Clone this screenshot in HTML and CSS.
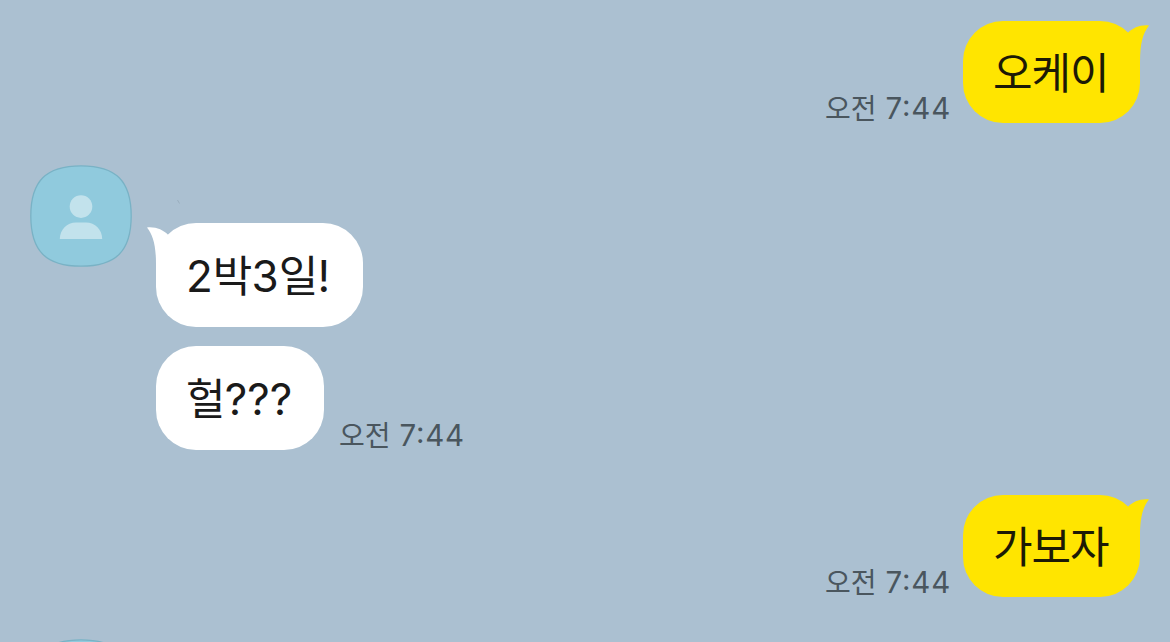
FILE: index.html
```
<!DOCTYPE html>
<html lang="ko">

<head>
    <meta charset="UTF-8">
    <meta name="viewport" content="width=device-width, initial-scale=1.0">
    <title>채팅</title>
    <link rel="stylesheet" href="styles.css">
</head>

<body>
    <main class="chat">
        <section class="row mine">
            <time class="time">오전 <span class="num">7:44</span></time>
            <div class="bubble">
                오케이
                <svg class="tail" viewBox="0 0 22 38"><path d="M1 7.7 C6 3 13 -.4 22 .5 C16 8 13 18 13 37 L0 37 Z" /></svg>
            </div>
        </section>

        <section class="row theirs">
            <svg class="avatar" viewBox="0 0 102 102">
                <path class="avatar-bg" d="M51 .8 C86 .8 101.2 16 101.2 51 S86 101.2 51 101.2 S.8 86 .8 51 S16 .8 51 .8 Z" />
                <circle class="person" cx="51" cy="41.6" r="11.3" />
                <path class="person" d="M29.8 74 C29.8 64.5 37 57.4 46 57.4 H56 C65 57.4 72.2 64.5 72.2 74 Z" />
            </svg>
            <div class="messages">
                <svg class="name" viewBox="0 0 100 58"><path d="M21.5 35 L23.5 38.5" /></svg>
                <div class="bubble">
                    2<span class="ko">박</span>3<span class="ko">일</span>!
                    <svg class="tail" viewBox="0 0 22 38"><path d="M1 7.7 C6 3 13 -.4 22 .5 C16 8 13 18 13 37 L0 37 Z" /></svg>
                </div>
                <div class="line">
                    <div class="bubble"><span class="ko">헐</span>???</div>
                    <time class="time">오전 <span class="num">7:44</span></time>
                </div>
            </div>
        </section>

        <section class="row mine">
            <time class="time">오전 <span class="num">7:44</span></time>
            <div class="bubble">
                가보자
                <svg class="tail" viewBox="0 0 22 38"><path d="M1 7.7 C6 3 13 -.4 22 .5 C16 8 13 18 13 37 L0 37 Z" /></svg>
            </div>
        </section>

        <section class="row theirs">
            <svg class="avatar" viewBox="0 0 102 102">
                <path class="avatar-bg" d="M51 .8 C86 .8 101.2 16 101.2 51 S86 101.2 51 101.2 S.8 86 .8 51 S16 .8 51 .8 Z" />
            </svg>
        </section>
    </main>
</body>

</html>
```

FILE: styles.css
```
* {
    margin: 0;
    padding: 0;
    box-sizing: border-box;
}

body {
    font-family: Inter, "Noto Sans CJK KR", sans-serif;
    color: #1a1a1a;
    background-color: #abc0d1;
    overflow: hidden;
}

.chat {
    height: 642px;
    padding: 21.4px 30px 0;
    overflow: hidden;
}

.row {
    display: flex;
}

.mine {
    justify-content: flex-end;
    align-items: flex-end;
    gap: 13px;
}

.theirs {
    align-items: flex-start;
    gap: 24px;
    margin: 42px 0 45px;
}

.messages {
    display: flex;
    flex-direction: column;
    align-items: flex-start;
    gap: 19px;
}

.name {
    width: 100px;
    height: 58px;
    margin-bottom: -19px;
    fill: none;
    stroke: #9aaebe;
    stroke-width: 1;
}

.line {
    display: flex;
    align-items: flex-end;
    gap: 15px;
}

.bubble {
    position: relative;
    width: 207px;
    height: 104px;
    padding-left: 30px;
    border-radius: 40px;
    background: #fff;
    font-size: 44px;
    line-height: 106px;
    white-space: nowrap;
}

.line .bubble {
    width: 168px;
}

.mine .bubble {
    width: 177px;
    height: 102px;
    background: #ffe500;
    color: #1c1a05;
    font-size: 43px;
    line-height: 104px;
    letter-spacing: -1px;
}

.ko {
    font-size: 43px;
    letter-spacing: -0.8px;
}

.tail {
    position: absolute;
    top: 4px;
    left: -9px;
    width: 22px;
    height: 38px;
    fill: #fff;
    transform: scaleX(-1);
}

.mine .tail {
    left: auto;
    right: -9px;
    fill: #ffe500;
    transform: none;
}

.time {
    margin-bottom: -1px;
    color: #4a565e;
    font-size: 28px;
    line-height: 30px;
    white-space: nowrap;
}

.num {
    margin-left: 1px;
    margin-right: -1px;
    font-size: 29.5px;
    font-feature-settings: "case";
    letter-spacing: 0.8px;
}

.avatar {
    flex: none;
    width: 102px;
    height: 102px;
}

.avatar-bg {
    fill: #90cadd;
    stroke: #79b2c5;
    stroke-width: 1.3;
}

.person {
    fill: #c2e2ec;
}
```
